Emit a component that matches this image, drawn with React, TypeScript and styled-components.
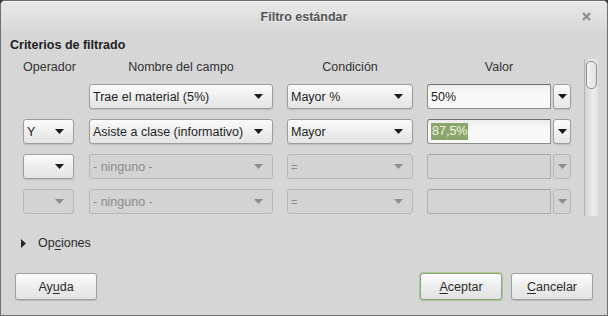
import styled, { createGlobalStyle } from 'styled-components';

const GlobalStyle = createGlobalStyle`
  html, body {
    margin: 0;
    padding: 0;
    background: #3c3c3c;
  }
  body {
    font-family: "Liberation Sans", Arial, sans-serif;
    font-size: 12.5px;
    color: #2a2a2a;
  }
`;

const Window = styled.div`
  width: 608px;
  height: 316px;
  box-sizing: border-box;
  border: 1px solid #6f6f6f;
  border-radius: 5px 5px 0 0;
  background: #d6d6d6;
  display: flex;
  flex-direction: column;
  overflow: hidden;
`;

const TitleBar = styled.div`
  height: 29px;
  display: grid;
  grid-template-columns: 1fr auto 1fr;
  align-items: center;
  background: linear-gradient(to bottom, #e8e8e8, #d8d8d8);
  border-top: 1px solid #f4f4f4;
`;

const Title = styled.div`
  grid-column: 2;
  font-weight: bold;
  color: #545454;
  text-shadow: 0 1px 0 rgba(255, 255, 255, 0.6);
`;

const CloseButton = styled.div`
  grid-column: 3;
  justify-self: end;
  margin-right: 16px;
  width: 9px;
  height: 9px;
  display: flex;
`;

const Body = styled.div`
  flex: 1;
  display: flex;
  flex-direction: column;
  padding: 6px 14px 15px 9px;
`;

const SectionHeading = styled.div`
  font-weight: bold;
  line-height: 16px;
  color: #222;
`;

const FilterFrame = styled.div`
  display: flex;
  align-items: flex-start;
  margin: 6px 0 0 13px;
`;

const FilterGrid = styled.div`
  display: grid;
  grid-template-columns: 52px 184px 126px 144px;
  grid-template-rows: 15px;
  grid-auto-rows: 25px;
  column-gap: 14px;
  row-gap: 10px;
  align-items: center;
`;

const ColumnHeader = styled.div`
  text-align: center;
  line-height: 16px;
  color: #333;
  align-self: start;
`;

const HeaderRow = styled.div`
  display: contents;
`;

const Combo = styled.div<{ $disabled?: boolean; $width?: number }>`
  box-sizing: border-box;
  height: 25px;
  width: ${p => (p.$width ? `${p.$width}px` : '100%')};
  display: flex;
  align-items: center;
  justify-content: space-between;
  padding: 0 9px 0 3px;
  border-radius: 3px;
  border: 1px solid ${p => (p.$disabled ? '#b6b6b6' : '#9d9d9d')};
  background: ${p =>
    p.$disabled
      ? '#d3d3d3'
      : 'linear-gradient(to bottom, #fbfbfb, #ececec 60%, #e4e4e4)'};
  box-shadow: ${p => (p.$disabled ? 'none' : '0 1px 1px rgba(0,0,0,0.12)')};
  color: ${p => (p.$disabled ? '#8b8b8b' : '#1e1e1e')};
  white-space: nowrap;
`;

const ComboText = styled.span<{ $small?: boolean }>`
  font-size: ${p => (p.$small ? '11px' : '12.5px')};
`;

const ValueField = styled.div`
  display: flex;
  gap: 2px;
  height: 25px;
`;

const ValueInput = styled.div<{ $disabled?: boolean }>`
  box-sizing: border-box;
  width: 124px;
  height: 25px;
  display: flex;
  align-items: center;
  padding-left: 3px;
  border-radius: 3px 0 0 3px;
  border: 1px solid ${p => (p.$disabled ? '#adadad' : '#8c8c8c')};
  border-top-color: ${p => (p.$disabled ? '#a4a4a4' : '#6f6f6f')};
  background: ${p =>
    p.$disabled ? '#d4d4d4' : 'linear-gradient(to bottom, #ececec, #f7f7f7 30%, #fafafa)'};
  color: #1e1e1e;
`;

const Selected = styled.span`
  background: #8ba66a;
  color: #eef3e6;
  padding: 0 1px;
  line-height: 17px;
`;

const DropButton = styled.div<{ $disabled?: boolean }>`
  box-sizing: border-box;
  width: 18px;
  height: 25px;
  display: flex;
  align-items: center;
  justify-content: center;
  border-radius: 3px;
  border: 1px solid ${p => (p.$disabled ? '#b6b6b6' : '#9d9d9d')};
  background: ${p =>
    p.$disabled ? '#d3d3d3' : 'linear-gradient(to bottom, #fbfbfb, #e6e6e6)'};
  box-shadow: ${p => (p.$disabled ? 'none' : '0 1px 1px rgba(0,0,0,0.12)')};
`;

const ScrollTrack = styled.div`
  box-sizing: border-box;
  width: 14px;
  height: 157px;
  margin-left: 13px;
  padding: 2px 1px 0 1px;
  border-left: 1px solid #b4b4b4;
  background: linear-gradient(to right, #d2d2d2, #ebebeb 60%, #e4e4e4);
`;

const ScrollThumb = styled.div`
  box-sizing: border-box;
  width: 11px;
  height: 28px;
  border-radius: 5px;
  border: 1px solid #8f8f8f;
  background: linear-gradient(to right, #f2f2f2, #e2e2e2);
`;

const Expander = styled.div`
  display: flex;
  align-items: center;
  gap: 12px;
  margin: 19px 0 0 11px;
  line-height: 16px;
  color: #2a2a2a;
`;

const Mnemonic = styled.span`
  text-decoration: underline;
  text-underline-offset: 2px;
`;

const ButtonRow = styled.div`
  margin-top: auto;
  display: flex;
  align-items: center;
  gap: 9px;
  padding-left: 5px;
`;

const Spacer = styled.div`
  flex: 1;
`;

const PushButton = styled.div<{ $default?: boolean }>`
  box-sizing: border-box;
  width: 82px;
  height: 27px;
  display: flex;
  align-items: center;
  justify-content: center;
  border-radius: 3px;
  border: 1px solid ${p => (p.$default ? '#8f9f84' : '#a0a0a0')};
  background: linear-gradient(to bottom, #fcfcfc, #ececec 55%, #e2e2e2);
  box-shadow: ${p =>
    p.$default
      ? '0 0 0 1px #a9cc8f, 0 1px 1px rgba(0,0,0,0.15)'
      : '0 1px 1px rgba(0,0,0,0.15)'};
  color: #2a2a2a;
`;

const Arrow = ({ color = '#1a1a1a' }: { color?: string }) => (
  <svg width="9" height="5" viewBox="0 0 9 5">
    <polygon points="0,0 9,0 4.5,5" fill={color} />
  </svg>
);

const CloseIcon = () => (
  <svg width="9" height="9" viewBox="0 0 9 9">
    <path d="M1 1 L8 8 M8 1 L1 8" stroke="#8f8f8f" strokeWidth="2.4" />
  </svg>
);

const Disclosure = () => (
  <svg width="5" height="9" viewBox="0 0 5 9">
    <polygon points="0,0 5,4.5 0,9" fill="#2a2a2a" />
  </svg>
);

const DISABLED_ARROW = '#8e8e8e';

export default function App() {
  return (
    <>
      <GlobalStyle />
      <Window>
        <TitleBar>
          <Title>Filtro estándar</Title>
          <CloseButton>
            <CloseIcon />
          </CloseButton>
        </TitleBar>
        <Body>
          <SectionHeading>Criterios de filtrado</SectionHeading>
          <FilterFrame>
            <FilterGrid>
              <HeaderRow>
                <ColumnHeader>Operador</ColumnHeader>
                <ColumnHeader>Nombre del campo</ColumnHeader>
                <ColumnHeader>Condición</ColumnHeader>
                <ColumnHeader>Valor</ColumnHeader>
              </HeaderRow>

              <div />
              <Combo>
                <ComboText>Trae el material (5%)</ComboText>
                <Arrow />
              </Combo>
              <Combo>
                <ComboText>Mayor %</ComboText>
                <Arrow />
              </Combo>
              <ValueField>
                <ValueInput>50%</ValueInput>
                <DropButton>
                  <Arrow />
                </DropButton>
              </ValueField>

              <Combo $width={51}>
                <ComboText>Y</ComboText>
                <Arrow />
              </Combo>
              <Combo>
                <ComboText>Asiste a clase (informativo)</ComboText>
                <Arrow />
              </Combo>
              <Combo>
                <ComboText>Mayor</ComboText>
                <Arrow />
              </Combo>
              <ValueField>
                <ValueInput>
                  <Selected>87,5%</Selected>
                </ValueInput>
                <DropButton>
                  <Arrow />
                </DropButton>
              </ValueField>

              <Combo $width={51}>
                <ComboText />
                <Arrow />
              </Combo>
              <Combo $disabled>
                <ComboText>- ninguno -</ComboText>
                <Arrow color={DISABLED_ARROW} />
              </Combo>
              <Combo $disabled>
                <ComboText $small>=</ComboText>
                <Arrow color={DISABLED_ARROW} />
              </Combo>
              <ValueField>
                <ValueInput $disabled />
                <DropButton $disabled>
                  <Arrow color={DISABLED_ARROW} />
                </DropButton>
              </ValueField>

              <Combo $width={51} $disabled>
                <ComboText />
                <Arrow color={DISABLED_ARROW} />
              </Combo>
              <Combo $disabled>
                <ComboText>- ninguno -</ComboText>
                <Arrow color={DISABLED_ARROW} />
              </Combo>
              <Combo $disabled>
                <ComboText $small>=</ComboText>
                <Arrow color={DISABLED_ARROW} />
              </Combo>
              <ValueField>
                <ValueInput $disabled />
                <DropButton $disabled>
                  <Arrow color={DISABLED_ARROW} />
                </DropButton>
              </ValueField>
            </FilterGrid>
            <ScrollTrack>
              <ScrollThumb />
            </ScrollTrack>
          </FilterFrame>

          <Expander>
            <Disclosure />
            <span>
              Op<Mnemonic>c</Mnemonic>iones
            </span>
          </Expander>

          <ButtonRow>
            <PushButton>
              Ay<Mnemonic>u</Mnemonic>da
            </PushButton>
            <Spacer />
            <PushButton $default>
              <Mnemonic>A</Mnemonic>ceptar
            </PushButton>
            <PushButton>
              <Mnemonic>C</Mnemonic>ancelar
            </PushButton>
          </ButtonRow>
        </Body>
      </Window>
    </>
  );
}
